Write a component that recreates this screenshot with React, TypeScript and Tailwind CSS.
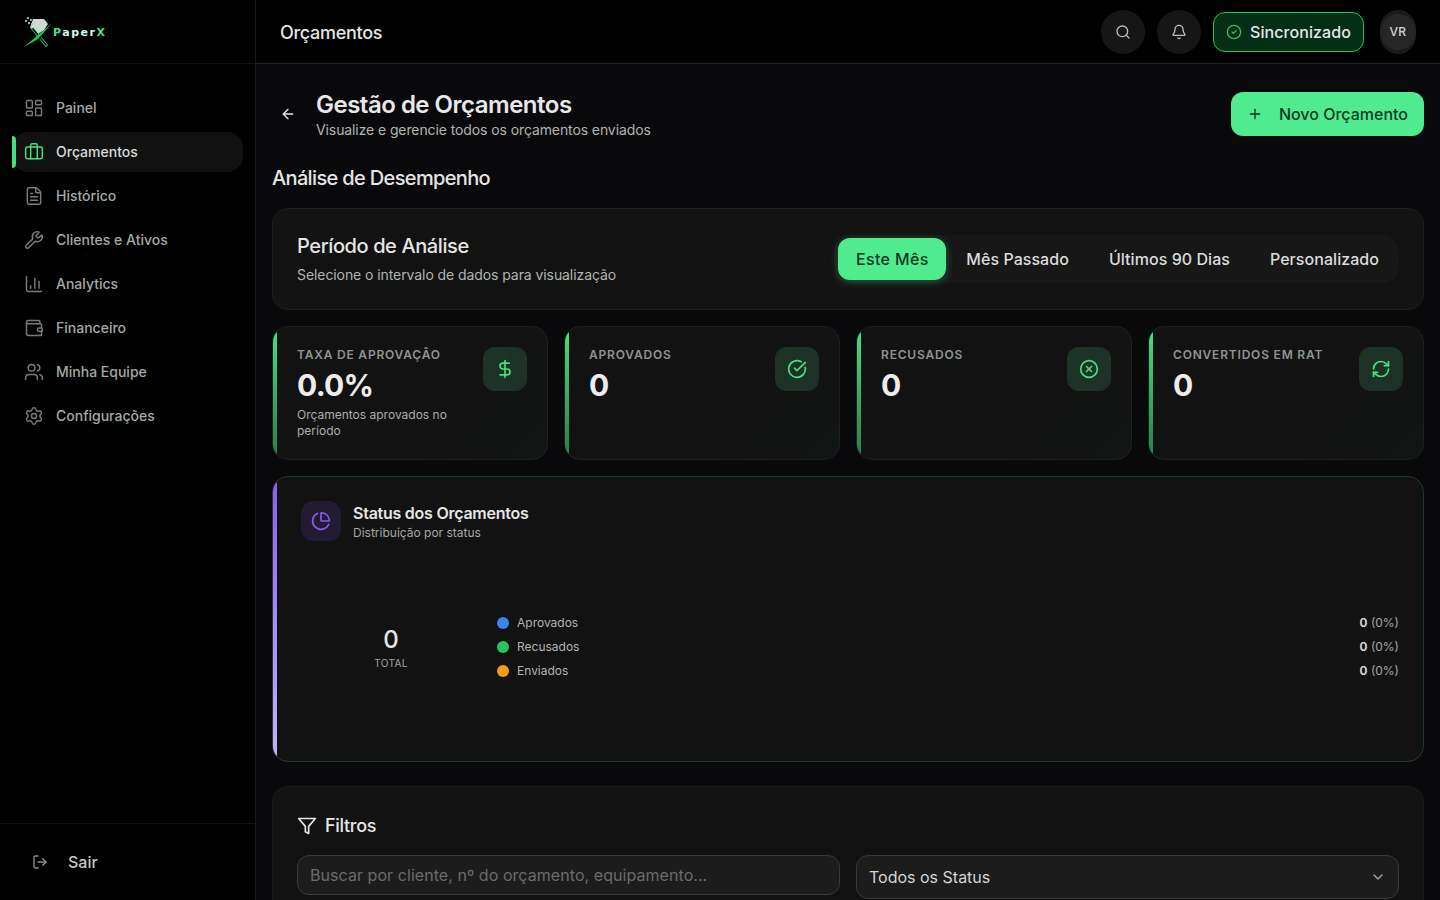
import React from 'react';
import {
  LayoutDashboard,
  Briefcase,
  FileText,
  Wrench,
  ChartColumn,
  Wallet,
  Users,
  Settings,
  LogOut,
  Search,
  Bell,
  CircleCheck,
  CircleCheckBig,
  CircleX,
  Plus,
  ArrowLeft,
  DollarSign,
  RefreshCw,
  ChartPie,
  ChevronDown,
} from 'lucide-react';
import { FiFilter } from 'react-icons/fi';

const navItems = [
  { icon: LayoutDashboard, label: 'Painel' },
  { icon: Briefcase, label: 'Orçamentos', active: true },
  { icon: FileText, label: 'Histórico' },
  { icon: Wrench, label: 'Clientes e Ativos' },
  { icon: ChartColumn, label: 'Analytics' },
  { icon: Wallet, label: 'Financeiro' },
  { icon: Users, label: 'Minha Equipe' },
  { icon: Settings, label: 'Configurações' },
];

const stats = [
  { label: 'Taxa de Aprovação', value: '0.0%', icon: DollarSign, note: 'Orçamentos aprovados no período' },
  { label: 'Aprovados', value: '0', icon: CircleCheckBig },
  { label: 'Recusados', value: '0', icon: CircleX },
  { label: 'Convertidos em RAT', value: '0', icon: RefreshCw },
];

const legend = [
  { label: 'Aprovados', color: 'bg-[#3b82f6]' },
  { label: 'Recusados', color: 'bg-[#22c55e]' },
  { label: 'Enviados', color: 'bg-[#f59e0b]' },
];

const periods = ['Mês Passado', 'Últimos 90 Dias', 'Personalizado'];

const Logo = () => (
  <div className="flex items-center">
    <svg width="30" height="32" viewBox="0 0 30 32" fill="none">
      {/* crystal */}
      <path d="M9 3h11l4 5-4 6-6 4-3-4-5-2z" fill="#cfd9d4" />
      <path d="M3 1h2v2H3zM6 3h2v2H6zM1 4h2v2H1zM4 6h2v2H4zM7 7h1.500v2H7z" fill="#9aa5a0" />
      {/* X */}
      <path d="M9 13l13 16" stroke="#4ade80" strokeWidth="3" strokeLinecap="square" />
      <path d="M9 13l13 16" stroke="#0a0f0c" strokeWidth="1.500" strokeLinecap="square" />
      <path d="M24 12L12 26" stroke="#0a0f0c" strokeWidth="2" />
      {/* slash */}
      <path d="M0 31L28 7 14 23z" fill="#22c55e" />
    </svg>
    <span className="-ml-[1px] pt-[2px] font-['DejaVu_Sans'] text-[11px] leading-none font-bold tracking-[1.5px] text-[#d1fae5]">
      <span className="text-[#4ade80]">P</span>aper<span className="text-[#4ade80]">X</span>
    </span>
  </div>
);

const Sidebar = () => (
  <aside className="flex h-screen w-64 shrink-0 flex-col border-r border-[#1a1a1a] bg-black">
    <div className="flex h-16 items-center border-b border-[#141414] pl-6">
      <Logo />
    </div>
    <nav className="flex flex-1 flex-col gap-1 pt-6 pr-3 pl-3">
      {navItems.map((item) => {
        const Icon = item.icon;
        return (
          <div key={item.label} className="relative">
            {item.active && <div className="absolute top-1 left-0 h-8 w-1 rounded-r-full bg-[#4ade80]" />}
            <div
              className={`flex h-10 items-center gap-3 rounded-2xl pl-3 text-sm font-medium ${
                item.active ? 'bg-[#111111] text-[#d9dcda]' : 'text-[#a3aaa6]'
              }`}
            >
              <Icon size={20} strokeWidth={1.75} className={item.active ? 'text-[#4ade80]' : 'text-[#787d7a]'} />
              <span>{item.label}</span>
            </div>
          </div>
        );
      })}
    </nav>
    <div className="flex h-[77px] items-center gap-5 border-t border-[#141414] pl-[32px] text-base font-medium text-[#c4c8c6]">
      <LogOut size={16} strokeWidth={2} className="text-[#8a8f8c]" />
      <span>Sair</span>
    </div>
  </aside>
);

const Header = () => (
  <header className="flex h-16 shrink-0 items-center justify-between border-b border-[#222222] bg-black pr-6 pl-6">
    <h1 className="pt-[2px] text-lg font-medium tracking-[-0.3px] text-[#e5e5e5]">Orçamentos</h1>
    <div className="flex items-center gap-3">
      <div className="flex h-11 w-11 items-center justify-center rounded-full bg-[#161616]">
        <Search size={16} strokeWidth={2} className="text-[#bdbdbd]" />
      </div>
      <div className="flex h-11 w-11 items-center justify-center rounded-full bg-[#161616]">
        <Bell size={16} strokeWidth={2} className="text-[#bdbdbd]" />
      </div>
      <div className="flex h-10 w-[151px] items-center gap-2 rounded-xl border border-[#22c55e] bg-[#052e16] pl-3 text-base font-medium tracking-[0.08px] text-[#e5e7eb]">
        <CircleCheck size={16} strokeWidth={2} className="text-[#22c55e]" />
        <span>Sincronizado</span>
      </div>
      <div className="ml-1 flex h-11 w-9 items-center justify-center rounded-full bg-[#1a1a1a]">
        <div className="flex h-9 w-9 items-center justify-center rounded-full bg-[#262626] text-xs font-medium tracking-[0.3px] text-[#d4d4d4]">
          VR
        </div>
      </div>
    </div>
  </header>
);

const StatCard = ({ stat }: { stat: (typeof stats)[number] }) => {
  const Icon = stat.icon;
  return (
    <div className="relative flex h-[134px] justify-between overflow-hidden rounded-2xl border border-[#1f1f1f] bg-[linear-gradient(135deg,#121212_65%,#101513_100%)] pt-5 pr-5 pl-6">
      <div className="absolute top-0 bottom-0 left-0 w-1 bg-[linear-gradient(180deg,#4ade80,#2a7a4c)]" />
      <div className="min-w-0">
        <div className="text-xs leading-4 font-semibold tracking-[0.8px] whitespace-nowrap text-[#8f9491] uppercase">
          {stat.label}
        </div>
        <div className="mt-[4px] text-[30px] leading-9 font-bold tracking-[-0.7px] text-[#ececec]">{stat.value}</div>
        {stat.note && <div className="mt-[4px] w-[172px] text-xs leading-4 text-[#a8aeab]">{stat.note}</div>}
      </div>
      <div className="flex h-11 w-11 shrink-0 items-center justify-center rounded-xl bg-[linear-gradient(135deg,#1c3527,#1f2f27)]">
        <Icon size={20} strokeWidth={2} className="text-[#4ade80]" />
      </div>
    </div>
  );
};

const Donut = () => (
  <div className="flex w-[180px] shrink-0 flex-col items-center">
    <div className="text-2xl leading-8 font-medium text-[#e5e5e5]">0</div>
    <div className="text-[10px] leading-[14px] tracking-[0.4px] text-[#a3a3a3]">TOTAL</div>
  </div>
);

const StatusCard = () => (
  <section className="relative h-[286px] overflow-hidden rounded-2xl border border-[#1e3a2a] bg-[#121212] pt-6 pr-6 pl-7">
    <div className="absolute top-0 bottom-0 left-0 w-1 bg-[linear-gradient(180deg,#8b5cf6,#c4b5fd)]" />
    <div className="flex items-center gap-3">
      <div className="flex h-10 w-10 items-center justify-center rounded-xl bg-[#221b33]">
        <ChartPie size={20} strokeWidth={2} className="text-[#8b5cf6]" />
      </div>
      <div>
        <div className="text-base leading-6 font-semibold tracking-[-0.25px] text-[#e5e5e5]">Status dos Orçamentos</div>
        <div className="text-xs leading-4 text-[#a3a8a5]">Distribuição por status</div>
      </div>
    </div>
    <div className="mt-[74px] flex items-center">
      <Donut />
      <div className="flex flex-1 flex-col gap-2 pl-4">
        {legend.map((row) => (
          <div key={row.label} className="flex h-4 items-center justify-between text-xs">
            <div className="flex items-center gap-2">
              <span className={`h-3 w-3 rounded-full ${row.color}`} />
              <span className="text-[#b0b5b2]">{row.label}</span>
            </div>
            <div className="text-[#a3a8a5]">
              <span className="font-semibold text-[#e0e0e0]">0</span> (0%)
            </div>
          </div>
        ))}
      </div>
    </div>
  </section>
);

export default function App() {
  return (
    <div className="flex h-screen overflow-hidden bg-[#09090b] font-['Inter',sans-serif]">
      <Sidebar />
      <div className="flex h-screen min-w-0 flex-1 flex-col">
        <Header />
        <main className="flex-1 overflow-hidden pt-7 pr-4 pl-4">
          <div className="flex h-11 items-center justify-between">
            <div className="flex items-center gap-5 pl-2">
              <ArrowLeft size={16} strokeWidth={2} className="text-[#e5e5e5]" />
              <div className="mt-[3px]">
                <h2 className="text-2xl leading-7 font-semibold tracking-[-0.5px] text-[#e8e8e8]">Gestão de Orçamentos</h2>
                <p className="mt-[1px] text-sm leading-5 tracking-[-0.1px] text-[#b0b5b2]">
                  Visualize e gerencie todos os orçamentos enviados
                </p>
              </div>
            </div>
            <div className="flex h-11 items-center gap-4 rounded-xl bg-[#50eb8f] px-4 text-base font-medium text-[#0a3a20]">
              <Plus size={16} strokeWidth={2} />
              <span>Novo Orçamento</span>
            </div>
          </div>

          <h3 className="mt-[28px] text-xl leading-7 font-medium tracking-[-0.65px] text-[#e5e5e5]">Análise de Desempenho</h3>

          <section className="mt-4 flex h-[102px] items-center justify-between rounded-2xl border border-[#1f1f1f] bg-[#121212] px-6">
            <div>
              <div className="-mt-[1px] text-xl leading-7 font-medium tracking-[-0.4px] text-[#e5e5e5]">Período de Análise</div>
              <div className="mt-[5px] text-sm leading-5 tracking-[-0.08px] text-[#b0b5b2]">
                Selecione o intervalo de dados para visualização
              </div>
            </div>
            <div className="flex h-12 items-center rounded-2xl bg-[#171717] pl-1 text-base font-medium">
              <div className="flex h-[42px] w-[108px] items-center justify-center rounded-xl bg-[#50eb8f] tracking-[0.35px] text-[#0a3a20] shadow-[0_2px_8px_rgba(74,222,128,0.35)]">
                Este Mês
              </div>
              {periods.map((p) => (
                <div key={p} className="flex h-[42px] items-center px-5 tracking-[0.05px] text-[#dcdcdc]">
                  {p}
                </div>
              ))}
            </div>
          </section>

          <div className="mt-4 grid grid-cols-4 gap-4">
            {stats.map((stat) => (
              <StatCard key={stat.label} stat={stat} />
            ))}
          </div>

          <div className="mt-4">
            <StatusCard />
          </div>

          <section className="mt-6 rounded-2xl border border-[#1a1a1a] bg-[#121212] px-6 pt-6 pb-6">
            <div className="flex h-7 items-center gap-2 pt-[2px] text-lg font-medium tracking-[-0.3px] text-[#e5e5e5]">
              <FiFilter size={20} className="text-[#e5e5e5]" />
              <span>Filtros</span>
            </div>
            <div className="mt-4 grid grid-cols-2 gap-4">
              <input
                readOnly
                placeholder="Buscar por cliente, nº do orçamento, equipamento..."
                className="h-10 rounded-xl border border-[#3a3a3a] bg-[#1c1c1c] px-3 text-base tracking-[0.06px] text-[#e5e5e5] outline-none placeholder:text-[#6b6b6b]"
              />
              <div className="flex h-11 items-center justify-between rounded-xl border border-[#3a3a3a] bg-[#1c1c1c] px-3 text-base text-[#d4d4d4]">
                <span>Todos os Status</span>
                <ChevronDown size={16} className="text-[#a3a3a3]" />
              </div>
            </div>
          </section>
        </main>
      </div>
    </div>
  );
}
